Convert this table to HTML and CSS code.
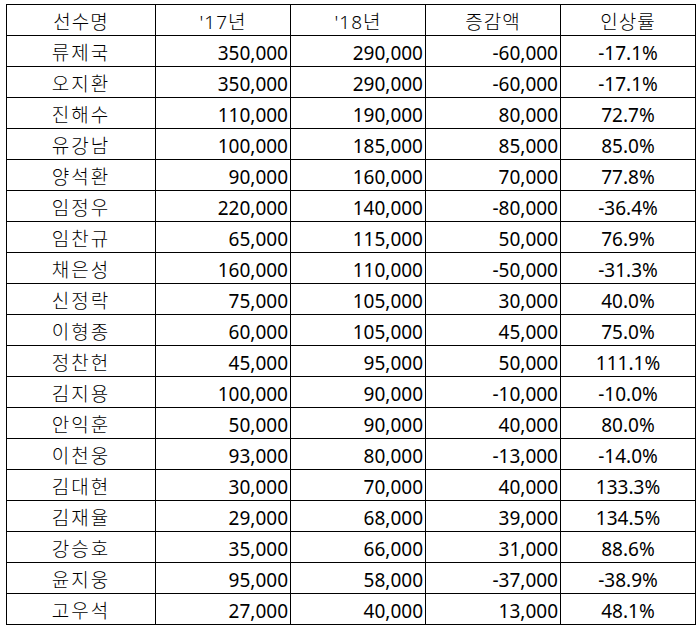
FILE: index.html
```html
<!DOCTYPE html>
<html lang="ko">
<head>
<meta charset="utf-8">
<link rel="stylesheet" href="styles.css">
</head>
<body>
<table class="sheet">
  <colgroup>
    <col class="c-name"><col class="c-num"><col class="c-num"><col class="c-num"><col class="c-rate">
  </colgroup>
  <thead>
    <tr><th>선수명</th><th>'17년</th><th>'18년</th><th>증감액</th><th>인상률</th></tr>
  </thead>
  <tbody>
    <tr><td class="name">류제국</td><td class="num">350,000</td><td class="num">290,000</td><td class="num">-60,000</td><td class="rate">-17.1%</td></tr>
    <tr><td class="name">오지환</td><td class="num">350,000</td><td class="num">290,000</td><td class="num">-60,000</td><td class="rate">-17.1%</td></tr>
    <tr><td class="name">진해수</td><td class="num">110,000</td><td class="num">190,000</td><td class="num">80,000</td><td class="rate">72.7%</td></tr>
    <tr><td class="name">유강남</td><td class="num">100,000</td><td class="num">185,000</td><td class="num">85,000</td><td class="rate">85.0%</td></tr>
    <tr><td class="name">양석환</td><td class="num">90,000</td><td class="num">160,000</td><td class="num">70,000</td><td class="rate">77.8%</td></tr>
    <tr><td class="name">임정우</td><td class="num">220,000</td><td class="num">140,000</td><td class="num">-80,000</td><td class="rate">-36.4%</td></tr>
    <tr><td class="name">임찬규</td><td class="num">65,000</td><td class="num">115,000</td><td class="num">50,000</td><td class="rate">76.9%</td></tr>
    <tr><td class="name">채은성</td><td class="num">160,000</td><td class="num">110,000</td><td class="num">-50,000</td><td class="rate">-31.3%</td></tr>
    <tr><td class="name">신정락</td><td class="num">75,000</td><td class="num">105,000</td><td class="num">30,000</td><td class="rate">40.0%</td></tr>
    <tr><td class="name">이형종</td><td class="num">60,000</td><td class="num">105,000</td><td class="num">45,000</td><td class="rate">75.0%</td></tr>
    <tr><td class="name">정찬헌</td><td class="num">45,000</td><td class="num">95,000</td><td class="num">50,000</td><td class="rate">111.1%</td></tr>
    <tr><td class="name">김지용</td><td class="num">100,000</td><td class="num">90,000</td><td class="num">-10,000</td><td class="rate">-10.0%</td></tr>
    <tr><td class="name">안익훈</td><td class="num">50,000</td><td class="num">90,000</td><td class="num">40,000</td><td class="rate">80.0%</td></tr>
    <tr><td class="name">이천웅</td><td class="num">93,000</td><td class="num">80,000</td><td class="num">-13,000</td><td class="rate">-14.0%</td></tr>
    <tr><td class="name">김대현</td><td class="num">30,000</td><td class="num">70,000</td><td class="num">40,000</td><td class="rate">133.3%</td></tr>
    <tr><td class="name">김재율</td><td class="num">29,000</td><td class="num">68,000</td><td class="num">39,000</td><td class="rate">134.5%</td></tr>
    <tr><td class="name">강승호</td><td class="num">35,000</td><td class="num">66,000</td><td class="num">31,000</td><td class="rate">88.6%</td></tr>
    <tr><td class="name">윤지웅</td><td class="num">95,000</td><td class="num">58,000</td><td class="num">-37,000</td><td class="rate">-38.9%</td></tr>
    <tr><td class="name">고우석</td><td class="num">27,000</td><td class="num">40,000</td><td class="num">13,000</td><td class="rate">48.1%</td></tr>
  </tbody>
</table>
</body>
</html>
```
FILE: styles.css
```css
html, body {
  margin: 0;
  padding: 0;
  background: #ffffff;
}
body {
  padding: 4px 0 0 6px;
  font-family: "Noto Sans", "Noto Sans CJK KR", sans-serif;
  color: #000000;
}
.sheet {
  border-collapse: collapse;
  table-layout: fixed;
  width: 689px;
}
.c-name { width: 149px; }
.c-num { width: 135px; }
.c-rate { width: 135px; }
.sheet th,
.sheet td {
  border: 1px solid #000000;
  height: 29px;
  padding: 0 2px 1px 2px;
  font-size: 19px;
  font-weight: 400;
  line-height: 24px;
  vertical-align: bottom;
  white-space: nowrap;
  overflow: hidden;
}
.sheet th {
  text-align: center;
  font-weight: 300;
  letter-spacing: 1px;
}
.sheet td.name {
  text-align: center;
  font-weight: 300;
  letter-spacing: 2px;
}
.sheet td.num {
  text-align: right;
}
.sheet td.rate {
  text-align: center;
}
```
